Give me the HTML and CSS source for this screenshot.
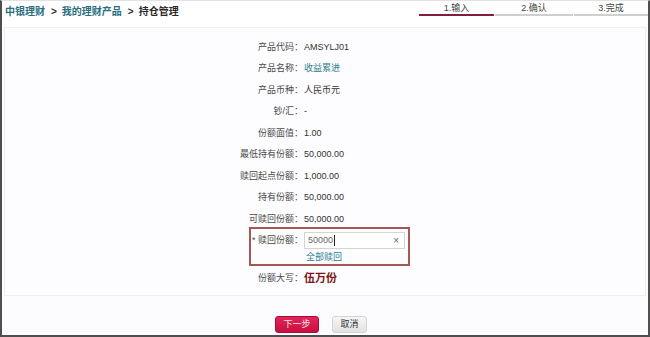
FILE: index.html
```html
<!DOCTYPE html>
<html lang="zh-CN">
<head>
<meta charset="utf-8">
<title>持仓管理</title>
<link rel="stylesheet" href="styles.css">
</head>
<body>
<div class="frame">
  <header class="top">
    <nav class="crumbs">
      <a class="crumb-link">中银理财</a><span class="sep">&gt;</span><a class="crumb-link">我的理财产品</a><span class="sep">&gt;</span><span class="crumb-cur">持仓管理</span>
    </nav>
    <ol class="steps">
      <li class="step step-1 active">1.输入</li>
      <li class="step step-2">2.确认</li>
      <li class="step step-3">3.完成</li>
    </ol>
  </header>
  <section class="panel">
    <div class="rows">
      <div class="row"><span class="lbl">产品代码：</span><span class="val">AMSYLJ01</span></div>
      <div class="row"><span class="lbl">产品名称：</span><span class="val link">收益累进</span></div>
      <div class="row"><span class="lbl">产品币种：</span><span class="val">人民币元</span></div>
      <div class="row"><span class="lbl">钞/汇：</span><span class="val">-</span></div>
      <div class="row"><span class="lbl">份额面值：</span><span class="val">1.00</span></div>
      <div class="row"><span class="lbl">最低持有份额：</span><span class="val">50,000.00</span></div>
      <div class="row"><span class="lbl">赎回起点份额：</span><span class="val">1,000.00</span></div>
      <div class="row"><span class="lbl">持有份额：</span><span class="val">50,000.00</span></div>
      <div class="row"><span class="lbl">可赎回份额：</span><span class="val">50,000.00</span></div>
    </div>
    <div class="redeem-box">
      <div class="redeem-row">
        <span class="lbl-box">* 赎回份额：</span>
        <div class="input"><span class="input-text">50000</span><span class="caret"></span><span class="clear">×</span></div>
      </div>
      <div class="redeem-all"><a class="link">全部赎回</a></div>
    </div>
    <div class="row upper-row"><span class="lbl">份额大写：</span><span class="val upper">伍万份</span></div>
  </section>
  <div class="actions">
    <button class="btn btn-primary">下一步</button>
    <button class="btn btn-cancel">取消</button>
  </div>
</div>
</body>
</html>
```
FILE: styles.css
```css
* { box-sizing: border-box; margin: 0; padding: 0; }
html, body { width: 650px; height: 337px; overflow: hidden; }
body {
  font-family: "Liberation Sans", "Noto Sans CJK SC", sans-serif;
  font-size: 9px;
  color: #333;
  background: #fcfbfd;
}
.frame {
  width: 650px;
  height: 337px;
  border-left: 2px solid #4e4e4e;
  border-right: 2px solid #4e4e4e;
  border-bottom: 2px solid #4e4e4e;
  border-top: 1px solid #e2e2e2;
  display: flex;
  flex-direction: column;
}
.top {
  height: 26px;
  display: flex;
  justify-content: space-between;
  align-items: flex-start;
  background: #fff;
}
.crumbs {
  padding-left: 3px;
  padding-top: 5px;
  font-size: 10px;
  line-height: 12px;
  font-weight: bold;
}
.crumb-link { color: #2b6e7e; }
.crumb-cur { color: #2a2a2a; }
.sep { color: #333; margin: 0 5px 0 6px; }
.steps {
  list-style: none;
  display: flex;
  gap: 1px;
}
.step {
  padding-top: 2px;
  line-height: 11px;
  text-align: center;
  color: #444;
  border-bottom: 2px solid #cfcfcf;
}
.step-1 { width: 75px; }
.step-2 { width: 78px; }
.step-3 { width: 74px; }
.step.active { border-bottom-color: #7e1d3d; }
.panel {
  margin: 0 2px;
  border: 1px solid #eeeeee;
  border-top-color: #f0f0f0;
  background: #fdfcfe;
  padding: 8.5px 0 5px;
}
.row {
  display: grid;
  grid-template-columns: 298px 1fr;
  column-gap: 1px;
  line-height: 21.5px;
  height: 21.5px;
}
.lbl { text-align: right; color: #4a4a4a; white-space: nowrap; }
.val { color: #333; }
.link { color: #2e8190; }
.redeem-box {
  margin: -3px 0 0 244px;
  width: 161px;
  border: 2px solid #a85555;
  padding: 3px 4px 0 0;
  height: 39px;
}
.redeem-row {
  display: grid;
  grid-template-columns: 52px 101px;
  column-gap: 1px;
  align-items: center;
}
.lbl-box { text-align: right; color: #4a4a4a; white-space: nowrap; line-height: 17px; }
.input {
  height: 17px;
  border: 1px solid #d4d4d4;
  background: #fff;
  display: flex;
  align-items: center;
  padding-left: 3px;
  padding-right: 5px;
  color: #666;
}
.input-text { line-height: 15px; }
.caret { width: 1px; height: 11px; background: #222; margin-left: 1px; }
.clear { margin-left: auto; color: #666; font-size: 10px; }
.redeem-all {
  margin-top: 2px;
  padding-left: 55px;
  line-height: 13px;
}
.upper-row { margin-top: 2px; }
.upper { color: #7d1414; font-weight: bold; font-size: 11px; }
.actions {
  flex: 1;
  display: flex;
  justify-content: center;
  gap: 13px;
  padding-top: 20px;
  padding-right: 8px;
}
.btn {
  height: 17px;
  font-family: "Liberation Sans", "Noto Sans CJK SC", sans-serif;
  font-size: 9px;
  border-radius: 3px;
  line-height: 15px;
}
.btn-primary {
  width: 44px;
  color: #fbe3ea;
  background: linear-gradient(#e2245a, #c8103f);
  border: 1px solid #a60d35;
}
.btn-cancel {
  width: 35px;
  color: #333;
  background: linear-gradient(#f6f6f6, #e2e2e2);
  border: 1px solid #d3d3d3;
}
```
